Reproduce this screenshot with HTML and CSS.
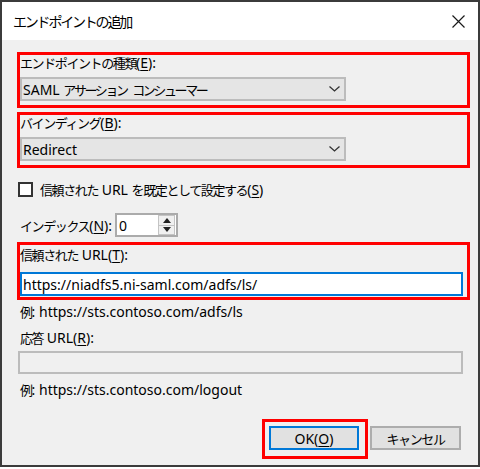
FILE: index.html
```html
<!DOCTYPE html>
<html lang="ja">
<head>
<meta charset="utf-8">
<title>エンドポイントの追加</title>
<link rel="stylesheet" href="styles.css">
</head>
<body>
<div class="win">
  <div class="titlebar">
    <span class="title j">エンドポイントの追加</span>
    <svg class="close" width="13" height="13" viewBox="0 0 13 13"><path d="M0.5 0.5 L12.5 12.5 M12.5 0.5 L0.5 12.5" stroke="#1a1a1a" stroke-width="1.2" fill="none"/></svg>
  </div>
  <div class="content">
    <div class="hl field">
      <div class="label"><span class="j">エンドポイントの種類</span>(<u>E</u>):</div>
      <div class="combo"><span>SAML <span class="j tight">アサーション コンシューマー</span></span><svg width="11" height="6" viewBox="0 0 11 6"><path d="M0.5 0.5 L5.5 5 L10.5 0.5" stroke="#333" stroke-width="1.3" fill="none"/></svg></div>
    </div>
    <div class="hl field second">
      <div class="label"><span class="j">バインディング</span>(<u>B</u>):</div>
      <div class="combo"><span>Redirect</span><svg width="11" height="6" viewBox="0 0 11 6"><path d="M0.5 0.5 L5.5 5 L10.5 0.5" stroke="#333" stroke-width="1.3" fill="none"/></svg></div>
    </div>
    <div class="check-row">
      <span class="checkbox"></span>
      <span><span class="j">信頼された</span> URL <span class="j">を既定として設定する</span>(<u>S</u>)</span>
    </div>
    <div class="index-row">
      <span class="index-label"><span class="j">インデックス</span>(<u>N</u>):</span>
      <div class="spin">
        <span class="spin-value">0</span>
        <div class="spin-btns">
          <span class="spin-btn"><svg width="8" height="5" viewBox="0 0 8 5"><path d="M0 5 L4 0 L8 5 Z" fill="#222"/></svg></span>
          <span class="spin-btn"><svg width="8" height="5" viewBox="0 0 8 5"><path d="M0 0 L4 5 L8 0 Z" fill="#222"/></svg></span>
        </div>
      </div>
    </div>
    <div class="hl url-box">
      <div class="label"><span class="j">信頼された</span> URL(<u>T</u>):</div>
      <div class="text-input focused">https://niadfs5.ni-saml.com/adfs/ls/</div>
    </div>
    <div class="line example"><span class="j">例</span>: https://sts.contoso.com/adfs/ls</div>
    <div class="line reply-label"><span class="j">応答</span> URL(<u>R</u>):</div>
    <div class="reply-input"></div>
    <div class="line example"><span class="j">例</span>: https://sts.contoso.com/logout</div>
    <div class="buttons">
      <div class="ok-hl"><div class="btn ok">OK(<u>O</u>)</div></div>
      <div class="btn cancel"><span class="j">キャンセル</span></div>
    </div>
  </div>
</div>
</body>
</html>
```
FILE: styles.css
```css
body {
  margin: 0;
  background: #fff;
  font-family: "Noto Sans", "Noto Sans CJK JP", sans-serif;
  font-size: 14px;
  color: #000;
}
.j {
  font-family: "Noto Sans CJK JP", sans-serif;
  font-size: 13px;
  letter-spacing: -1.4px;
  word-spacing: 5px;
}
.j.tight {
  letter-spacing: -2.4px;
}
u {
  text-decoration-thickness: 1px;
  text-underline-offset: 2px;
}
.win {
  width: 480px;
  height: 467px;
  box-sizing: border-box;
  border: 2px solid #3b3b3b;
  background: #f0f0f0;
  display: flex;
  flex-direction: column;
}
.titlebar {
  height: 38px;
  flex: none;
  background: #fff;
  display: flex;
  align-items: center;
  justify-content: space-between;
  padding: 0 13px 0 11px;
}
.title {
  font-size: 14px;
  letter-spacing: -2.2px;
}
.close {
  display: block;
}
.content {
  flex: 1;
  display: flex;
  flex-direction: column;
  padding: 12px 8px 0 15px;
}
.hl {
  border: 3px solid #ff0000;
}
.field {
  padding-bottom: 4px;
}
.field.second {
  margin-top: 4px;
}
.label {
  height: 16px;
  line-height: 16px;
  white-space: nowrap;
}
.combo {
  margin-top: 6px;
  width: 326px;
  height: 24px;
  box-sizing: border-box;
  border: 2px solid #bcbcbc;
  background: #e5e5e5;
  display: flex;
  align-items: center;
  justify-content: space-between;
  padding: 0 4px 0 1px;
}
.combo svg {
  display: block;
}
.check-row {
  margin: 14px 0 0 1px;
  display: flex;
  align-items: center;
  gap: 7px;
  height: 15px;
}
.checkbox {
  width: 15px;
  height: 15px;
  box-sizing: border-box;
  border: 2px solid #333;
  background: #fff;
}
.index-row {
  margin: 16px 0 0 3px;
  display: flex;
  align-items: center;
}
.index-label {
  width: 95px;
  white-space: nowrap;
}
.spin {
  width: 63px;
  height: 24px;
  box-sizing: border-box;
  border: 2px solid #ababab;
  background: #fff;
  display: flex;
  align-items: center;
  justify-content: space-between;
  padding: 0 1px 0 2px;
}
.spin-btns {
  width: 17px;
  height: 20px;
  display: flex;
  flex-direction: column;
  border: 1px solid #c4c4c4;
  box-sizing: border-box;
  background: #f0f0f0;
}
.spin-btn {
  flex: 1;
  display: flex;
  align-items: center;
  justify-content: center;
}
.spin-btn + .spin-btn {
  border-top: 1px solid #c4c4c4;
}
.spin-btn svg {
  display: block;
}
.url-box {
  margin-top: 5px;
  padding: 2px 0 1px;
}
.text-input {
  margin-top: 9px;
  width: 443px;
  height: 24px;
  box-sizing: border-box;
  background: #fff;
  border: 2px solid #0078d7;
  display: flex;
  align-items: center;
  padding-left: 1px;
}
.line {
  line-height: 20px;
  margin-left: 3px;
}
.example {
  margin-top: 2px;
}
.reply-label {
  margin-top: 6px;
}
.reply-input {
  margin: 3px 0 0 1px;
  width: 445px;
  height: 23px;
  box-sizing: border-box;
  border: 2px solid #bcbcbc;
  background: #f0f0f0;
}
.reply-input + .example {
  margin-top: 6px;
}
.buttons {
  margin-top: 19px;
  display: flex;
  justify-content: flex-end;
  align-items: flex-start;
  gap: 2px;
  padding-right: 9px;
}
.ok-hl {
  border: 3px solid #ff0000;
  padding: 4px 6px 6px 4px;
}
.btn {
  height: 24px;
  box-sizing: border-box;
  display: flex;
  align-items: center;
  justify-content: center;
  background: #e1e1e1;
  border: 2px solid #adadad;
}
.ok {
  width: 90px;
  border-color: #0078d7;
}
.cancel {
  width: 91px;
  margin-top: 7px;
}
```
